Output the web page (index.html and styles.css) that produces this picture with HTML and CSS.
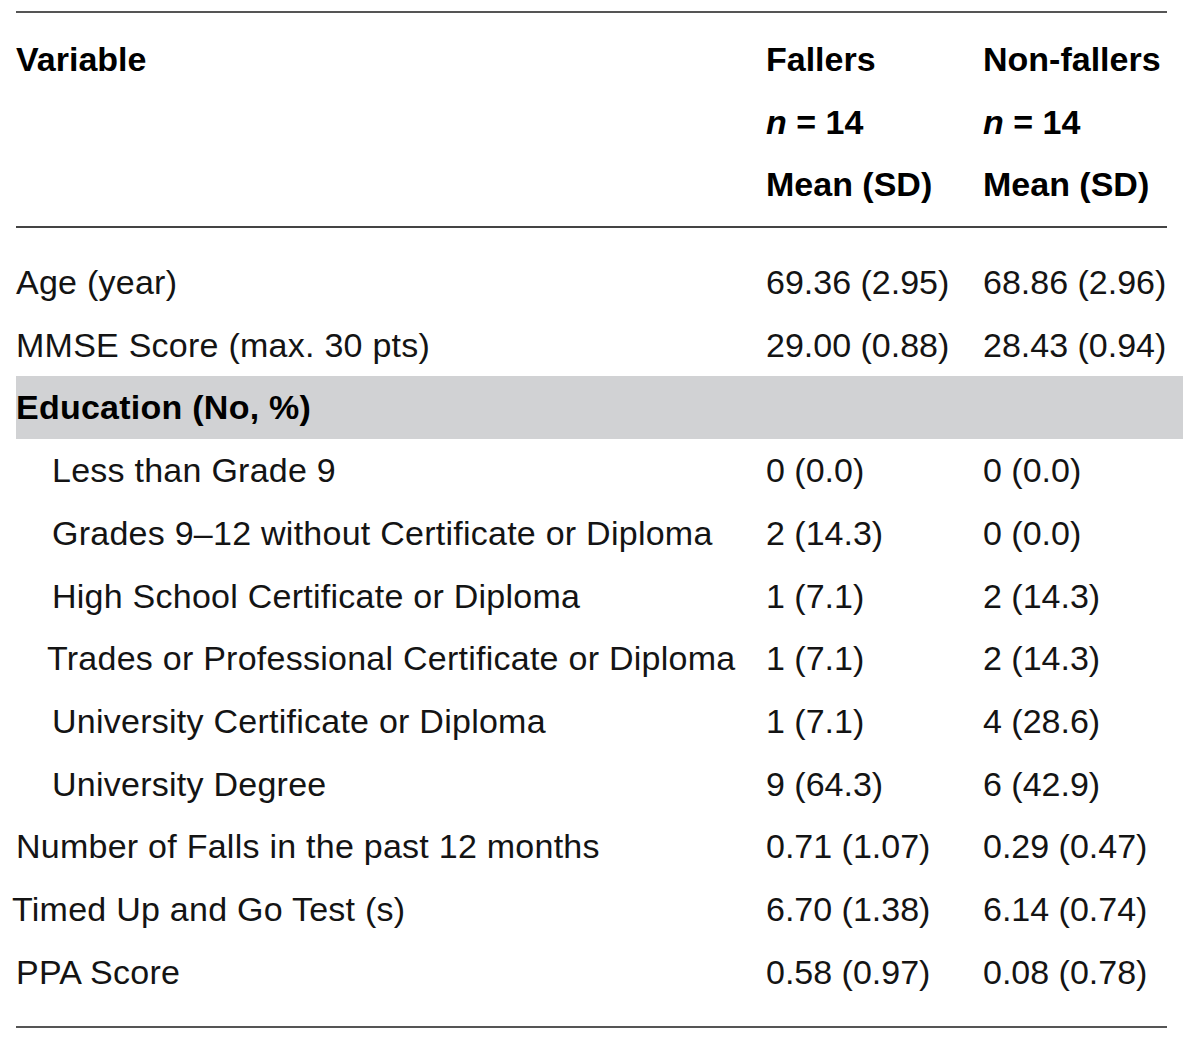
FILE: index.html
```html
<!DOCTYPE html>
<html lang="en">
<head>
    <meta charset="UTF-8">
    <title>Fallers vs Non-fallers</title>
    <link rel="stylesheet" href="styles.css">
</head>
<body>
    <div class="stats-table">
        <div class="table-head">
            <div class="row">
                <div class="cell">Variable</div>
                <div class="cell">Fallers</div>
                <div class="cell">Non-fallers</div>
            </div>
            <div class="row">
                <div class="cell"></div>
                <div class="cell"><i>n</i> = 14</div>
                <div class="cell"><i>n</i> = 14</div>
            </div>
            <div class="row">
                <div class="cell"></div>
                <div class="cell">Mean (SD)</div>
                <div class="cell">Mean (SD)</div>
            </div>
        </div>

        <div class="table-body">
            <div class="row">
                <div class="cell">Age (year)</div>
                <div class="cell">69.36 (2.95)</div>
                <div class="cell">68.86 (2.96)</div>
            </div>
            <div class="row">
                <div class="cell">MMSE Score (max. 30 pts)</div>
                <div class="cell">29.00 (0.88)</div>
                <div class="cell">28.43 (0.94)</div>
            </div>
            <div class="row row-group">
                <div class="cell">Education (No, %)</div>
                <div class="cell"></div>
                <div class="cell"></div>
            </div>
            <div class="row sub">
                <div class="cell">Less than Grade 9</div>
                <div class="cell">0 (0.0)</div>
                <div class="cell">0 (0.0)</div>
            </div>
            <div class="row sub">
                <div class="cell">Grades 9–12 without Certificate or Diploma</div>
                <div class="cell">2 (14.3)</div>
                <div class="cell">0 (0.0)</div>
            </div>
            <div class="row sub">
                <div class="cell">High School Certificate or Diploma</div>
                <div class="cell">1 (7.1)</div>
                <div class="cell">2 (14.3)</div>
            </div>
            <div class="row sub sub-tight">
                <div class="cell">Trades or Professional Certificate or Diploma</div>
                <div class="cell">1 (7.1)</div>
                <div class="cell">2 (14.3)</div>
            </div>
            <div class="row sub">
                <div class="cell">University Certificate or Diploma</div>
                <div class="cell">1 (7.1)</div>
                <div class="cell">4 (28.6)</div>
            </div>
            <div class="row sub">
                <div class="cell">University Degree</div>
                <div class="cell">9 (64.3)</div>
                <div class="cell">6 (42.9)</div>
            </div>
            <div class="row">
                <div class="cell">Number of Falls in the past 12 months</div>
                <div class="cell">0.71 (1.07)</div>
                <div class="cell">0.29 (0.47)</div>
            </div>
            <div class="row row-tight">
                <div class="cell">Timed Up and Go Test (s)</div>
                <div class="cell">6.70 (1.38)</div>
                <div class="cell">6.14 (0.74)</div>
            </div>
            <div class="row">
                <div class="cell">PPA Score</div>
                <div class="cell">0.58 (0.97)</div>
                <div class="cell">0.08 (0.78)</div>
            </div>
        </div>
    </div>
</body>
</html>
```

FILE: styles.css
```css
* {
    margin: 0;
    padding: 0;
    box-sizing: border-box;
}

body {
    font-family: 'Liberation Sans', Arial, sans-serif;
    background-color: #fff;
    color: #141414;
}

.stats-table {
    width: 1151px;
    margin: 11px 0 0 16px;
    border-top: 2px solid #555;
    border-bottom: 2px solid #555;
    font-size: 34px;
}

.table-head {
    padding: 15px 0 10px;
    border-bottom: 2px solid #444;
    font-weight: bold;
    color: #000;
}

.table-body {
    padding: 23px 0 23px;
}

.row {
    display: grid;
    grid-template-columns: 750px 217px 1fr;
    height: 62.7px;
    line-height: 62.7px;
    white-space: nowrap;
}

.table-body .cell:first-child {
    letter-spacing: 0.25px;
}

.row-group {
    margin-right: -16px;
    background-color: #d1d2d4;
    font-weight: bold;
    color: #000;
}

.sub .cell:first-child {
    padding-left: 36px;
}

.sub-tight .cell:first-child {
    padding-left: 31px;
}

.row-tight .cell:first-child {
    margin-left: -4px;
}
```
